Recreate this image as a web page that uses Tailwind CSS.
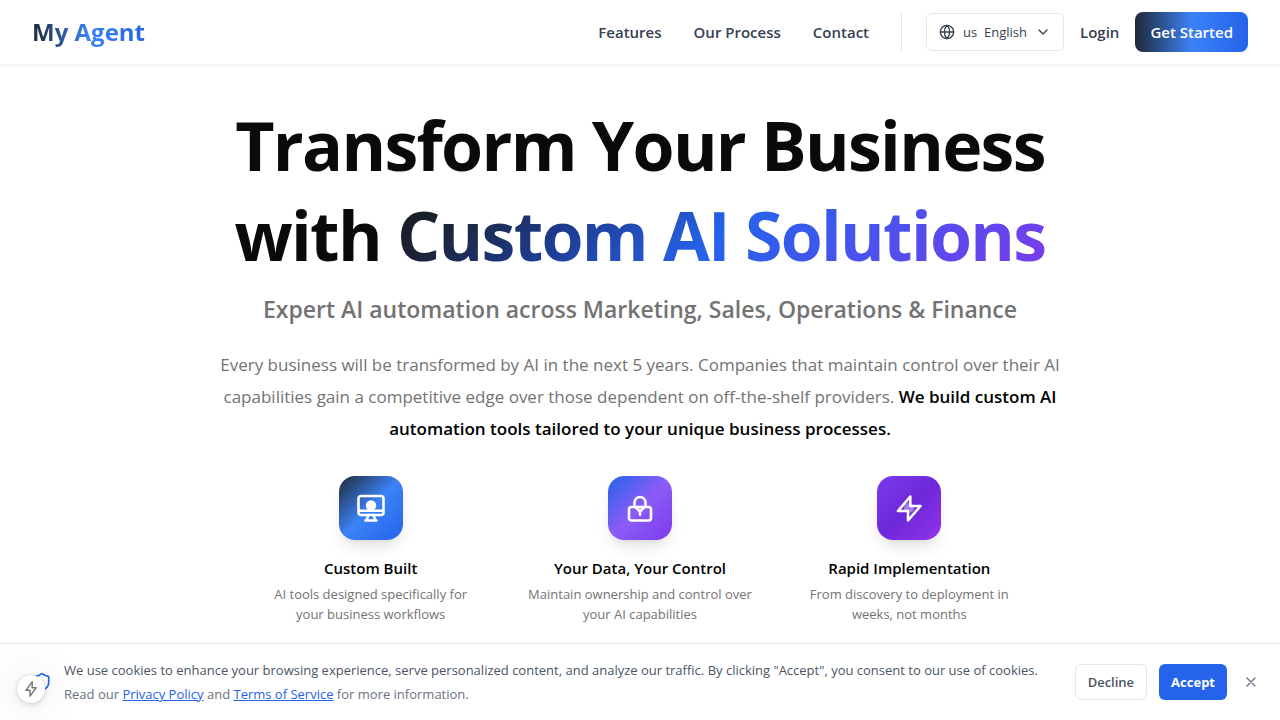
<!DOCTYPE html>
<html lang="en">
<head>
<meta charset="utf-8">
<meta name="viewport" content="width=device-width, initial-scale=1">
<title>My Agent</title>
<script src="https://cdn.jsdelivr.net/npm/@tailwindcss/browser@4"></script>
</head>
<body class="min-h-screen bg-white pb-20 font-['Segoe_UI','Open_Sans','Noto_Sans',sans-serif] text-neutral-950">
<header class="flex h-16 items-center justify-between bg-white px-8 shadow-[0_1px_3px_#00000014]">
  <a href="#" class="bg-[linear-gradient(90deg,#1f2937,#3b82f6_50%,#2563eb)] bg-clip-text text-[24px] leading-8 font-bold text-transparent">My Agent</a>
  <div class="flex items-center">
    <nav class="flex items-center gap-8 text-[15px] leading-6 font-semibold text-gray-700">
      <a href="#features">Features</a>
      <a href="#process">Our Process</a>
      <a href="#contact">Contact</a>
    </nav>
    <div class="ml-8 flex h-10 items-center gap-4 border-l border-gray-200 pl-6">
      <div class="flex h-[38px] items-center gap-2 rounded-md border border-gray-200 px-3 text-gray-700">
        <svg class="size-4" viewBox="0 0 24 24" fill="none" stroke="currentColor" stroke-width="2" stroke-linecap="round" stroke-linejoin="round" aria-hidden="true"><circle cx="12" cy="12" r="10"/><path d="M12 2a14.5 14.5 0 0 0 0 20 14.5 14.5 0 0 0 0-20M2 12h20"/></svg>
        <select aria-label="Language" class="appearance-none bg-transparent text-[13px] leading-5">
          <option>us&nbsp; English</option>
        </select>
        <svg class="size-4" viewBox="0 0 24 24" fill="none" stroke="currentColor" stroke-width="2" stroke-linecap="round" stroke-linejoin="round" aria-hidden="true"><path d="m6 9 6 6 6-6"/></svg>
      </div>
      <a href="#login" class="text-[15px] leading-6 font-semibold text-gray-700">Login</a>
      <button type="button" class="h-10 rounded-lg bg-[linear-gradient(90deg,#1f2937,#3b82f6_50%,#2563eb)] px-[15px] text-[15px] leading-6 font-semibold text-white">Get Started</button>
    </div>
  </div>
</header>

<main class="mx-auto flex max-w-4xl flex-col items-center pt-9 text-center">
  <h1 class="text-[68px] leading-[90px] font-bold tracking-tight">Transform Your Business<br>with <span class="bg-[linear-gradient(135deg,#171717,#1b2436_12%,#1e3a8a_27%,#2563eb_50%,#7c3aed)] bg-clip-text text-transparent">Custom AI Solutions</span></h1>
  <p class="mt-[13px] text-[23px] leading-8 font-semibold text-neutral-500">Expert AI automation across Marketing, Sales, Operations &amp; Finance</p>
  <p class="mt-6 text-[17px] leading-8 text-neutral-500">Every business will be transformed by AI in the next 5 years. Companies that maintain control over their AI capabilities gain a competitive edge over those dependent on off-the-shelf providers. <strong class="font-semibold text-black">We build custom AI automation tools tailored to your unique business processes.</strong></p>

  <ul id="features" class="mt-[31px] grid w-full max-w-3xl grid-cols-3 gap-10">
    <li class="flex flex-col items-center">
      <div class="flex size-16 items-center justify-center rounded-2xl bg-[linear-gradient(135deg,#1f2937,#3b82f6_50%,#2563eb)] text-white shadow-lg">
        <svg class="size-8" viewBox="0 0 32 32" fill="none" stroke="currentColor" stroke-width="2.6" stroke-linecap="round" stroke-linejoin="round" aria-hidden="true"><rect x="3.500" y="4" width="25" height="19" rx="2.5"/><path d="M4 18.700h24M13.500 23l-2 5.500M18.500 23l2 5.500M10.500 28.500h11"/><circle cx="16" cy="13.500" r="5.200" fill="currentColor" stroke="none"/></svg>
      </div>
      <h3 class="mt-4 text-[15px] leading-6 font-semibold text-black">Custom Built</h3>
      <p class="mt-1 px-3 text-[13px] leading-5 text-neutral-500">AI tools designed specifically for your business workflows</p>
    </li>
    <li class="flex flex-col items-center">
      <div class="flex size-16 items-center justify-center rounded-2xl bg-[linear-gradient(135deg,#2563eb,#8b5cf6_50%,#7c3aed)] text-white shadow-lg">
        <svg class="size-8" viewBox="0 0 32 32" fill="none" stroke="currentColor" stroke-width="2.6" stroke-linecap="round" stroke-linejoin="round" aria-hidden="true"><rect x="5" y="15" width="22" height="13.500" rx="2.5"/><path d="M10.500 15v-4.500a5.500 5.500 0 0 1 11 0V15M12.500 16l3.500 3.500 3.500-3.500M16 19.500v3.300"/></svg>
      </div>
      <h3 class="mt-4 text-[15px] leading-6 font-semibold text-black">Your Data, Your Control</h3>
      <p class="mt-1 text-[13px] leading-5 text-neutral-500">Maintain ownership and control over your AI capabilities</p>
    </li>
    <li class="flex flex-col items-center">
      <div class="flex size-16 items-center justify-center rounded-2xl bg-[linear-gradient(135deg,#7c3aed,#6d28d9_50%,#9333ea)] text-white shadow-lg">
        <svg class="size-8" viewBox="0 0 32 32" fill="none" stroke="currentColor" stroke-width="2.6" stroke-linecap="round" stroke-linejoin="round" aria-hidden="true"><circle cx="16" cy="16" r="5" fill="currentColor" fill-opacity=".4" stroke="none"/><path d="M17.300 4.500 5 19h10v9.500L27.500 14H17.300z"/></svg>
      </div>
      <h3 class="mt-4 text-[15px] leading-6 font-semibold text-black">Rapid Implementation</h3>
      <p class="mt-1 text-[13px] leading-5 text-neutral-500">From discovery to deployment in weeks, not months</p>
    </li>
  </ul>
</main>

<section aria-label="Cookie consent" class="fixed inset-x-0 bottom-0 flex items-center border-t border-gray-200 bg-white py-[14px] pr-[17px] pl-8">
  <svg class="mr-3 size-5 shrink-0 text-[#2563eb]" viewBox="0 0 24 24" fill="none" stroke="currentColor" stroke-width="2" stroke-linecap="round" stroke-linejoin="round" aria-hidden="true"><path d="M20 13c0 5-3.500 7.500-7.660 8.950a1 1 0 0 1-.67-.01C7.500 20.500 4 18 4 13V6a1 1 0 0 1 1-1c2 0 4.500-1.200 6.240-2.720a1.170 1.170 0 0 1 1.520 0C14.510 3.810 17 5 19 5a1 1 0 0 1 1 1z"/></svg>
  <div class="grow text-[13px] leading-6">
    <p class="text-gray-600">We use cookies to enhance your browsing experience, serve personalized content, and analyze our traffic. By clicking "Accept", you consent to our use of cookies.</p>
    <p class="text-gray-500">Read our <a href="#privacy" class="text-[#2563eb] underline">Privacy Policy</a> and <a href="#terms" class="text-[#2563eb] underline">Terms of Service</a> for more information.</p>
  </div>
  <div class="flex shrink-0 items-center gap-3 text-[13px] leading-5">
    <button type="button" class="h-9 rounded-md border border-gray-200 bg-white px-3 font-semibold text-gray-600">Decline</button>
    <button type="button" class="h-9 rounded-md bg-[#2563eb] px-3 font-bold text-white">Accept</button>
    <button type="button" aria-label="Close" class="flex size-6 items-center justify-center text-gray-500"><svg class="size-4" viewBox="0 0 24 24" fill="none" stroke="currentColor" stroke-width="2" stroke-linecap="round" aria-hidden="true"><path d="M18 6 6 18M6 6l12 12"/></svg></button>
  </div>
</section>
<button type="button" aria-label="Quick actions" class="fixed bottom-[17px] left-[17px] flex size-7 items-center justify-center rounded-full bg-white text-neutral-500 shadow-[0_0_0_1px_#0000000d,0_2px_6px_#00000026,0_0_40px_#00000024]">
  <svg class="h-4 w-3" viewBox="0 0 12 16" fill="none" stroke="currentColor" stroke-width="1.400" stroke-linejoin="round" aria-hidden="true"><path d="M7.200.8.900 9.300H5V15.200L11.200 6.700H7.200z"/></svg>
</button>
</body>
</html>
